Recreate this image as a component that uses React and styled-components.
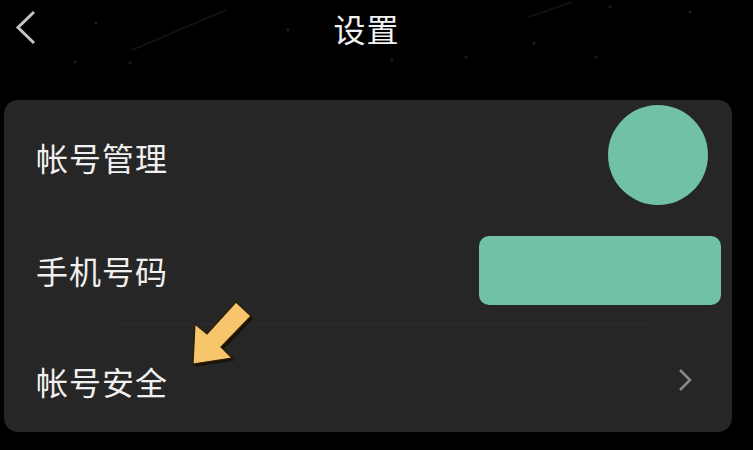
import React from "react";
import styled, { createGlobalStyle } from "styled-components";

const Global = createGlobalStyle`
  html, body { margin: 0; padding: 0; background: #000; }
  body { font-family: "Noto Sans CJK SC", "Noto Sans", sans-serif; }
`;

const Page = styled.div`
  position: relative;
  width: 753px;
  height: 450px;
  background: #000;
  overflow: hidden;
`;

const Header = styled.header`
  position: relative;
  height: 100px;
  display: grid;
  grid-template-columns: 1fr auto 1fr;
  align-items: start;
`;

const Stars = styled.svg`
  position: absolute;
  inset: 0;
  pointer-events: none;
`;

const BackButton = styled.button`
  justify-self: start;
  margin: 10px 0 0 14px;
  padding: 0;
  border: 0;
  background: none;
  display: flex;
`;

const Title = styled.h1`
  position: relative;
  margin: 6px 20px 0 0;
  font-size: 32px;
  line-height: 44px;
  font-weight: 400;
  color: #f2f2f2;
  letter-spacing: 1px;
`;

const Card = styled.section`
  margin: 0 21px 0 4px;
  height: 332px;
  border-radius: 14px;
  background: #262626;
  overflow: hidden;
  display: flex;
  flex-direction: column;
`;

const Row = styled.div`
  height: ${(p) => p.$h}px;
  display: flex;
  align-items: center;
  justify-content: space-between;
  padding: 0 ${(p) => p.$right}px 0 32px;
  box-sizing: border-box;
`;

const Divider = styled.div`
  height: 1px;
  margin: 0 40px 0 32px;
  background: linear-gradient(90deg, rgba(255,255,255,0.02), rgba(255,255,255,0.045) 40%, rgba(255,255,255,0.045) 80%, rgba(255,255,255,0.02));
`;

const Label = styled.span`
  font-size: 32px;
  line-height: 1;
  color: #f0f0f0;
  letter-spacing: 1px;
  margin-top: ${(p) => p.$offset || 0}px;
`;

const Avatar = styled.div`
  width: 100px;
  height: 100px;
  border-radius: 50%;
  background: #71c1a9;
  margin-top: -4px;
`;

const Mask = styled.div`
  width: 242px;
  height: 69px;
  border-radius: 10px;
  background: #71c1a9;
  margin-top: 4px;
`;

const Arrow = styled.svg`
  position: absolute;
  left: 185px;
  top: 294px;
  width: 76px;
  height: 78px;
  overflow: visible;
`;

export default function App() {
  return (
    <>
      <Global />
      <Page>
        <Header>
          <Stars width="753" height="100" viewBox="0 0 753 100">
            <line x1="132" y1="50" x2="226" y2="10" stroke="#141414" strokeWidth="1.5" />
            <line x1="529" y1="17" x2="572" y2="2" stroke="#141414" strokeWidth="1.5" />
            {[
              [288, 30], [534, 43], [466, 57], [596, 57], [690, 12],
              [130, 63], [75, 62], [96, 23], [610, 7], [392, 60],
            ].map(([x, y], i) => (
              <circle key={i} cx={x} cy={y} r="1.6" fill="#1e1e1e" />
            ))}
          </Stars>
          <BackButton aria-label="返回">
            <svg width="24" height="36" viewBox="0 0 24 36">
              <polyline points="20,2 4,17.5 20,33" fill="none" stroke="#c4c4c4" strokeWidth="3" strokeLinejoin="miter" />
            </svg>
          </BackButton>
          <Title>设置</Title>
          <div />
        </Header>
        <Card>
          <Row $h={113} $right={24}>
            <Label>帐号管理</Label>
            <Avatar />
          </Row>
          <Row $h={111} $right={11}>
            <Label $offset={2}>手机号码</Label>
            <Mask />
          </Row>
          <Divider />
          <Row $h={107} $right={40}>
            <Label $offset={4}>帐号安全</Label>
            <svg width="14" height="24" viewBox="0 0 14 24" style={{ marginTop: 2 }}>
              <polyline points="2,2 12,12 2,22" fill="none" stroke="#8a8a8a" strokeWidth="2.5" />
            </svg>
          </Row>
        </Card>
        <Arrow viewBox="185 294 76 78">
          <polygon
            points="236,302 251,316 221,347 232,358 193,364 195,324 207,334"
            fill="#1a1306"
            transform="translate(2.5,2.5)"
          />
          <polygon
            points="236,302 251,316 221,347 232,358 193,364 195,324 207,334"
            fill="#f6c56c"
            stroke="#2a1e08"
            strokeWidth="1.2"
            strokeLinejoin="miter"
          />
        </Arrow>
      </Page>
    </>
  );
}
